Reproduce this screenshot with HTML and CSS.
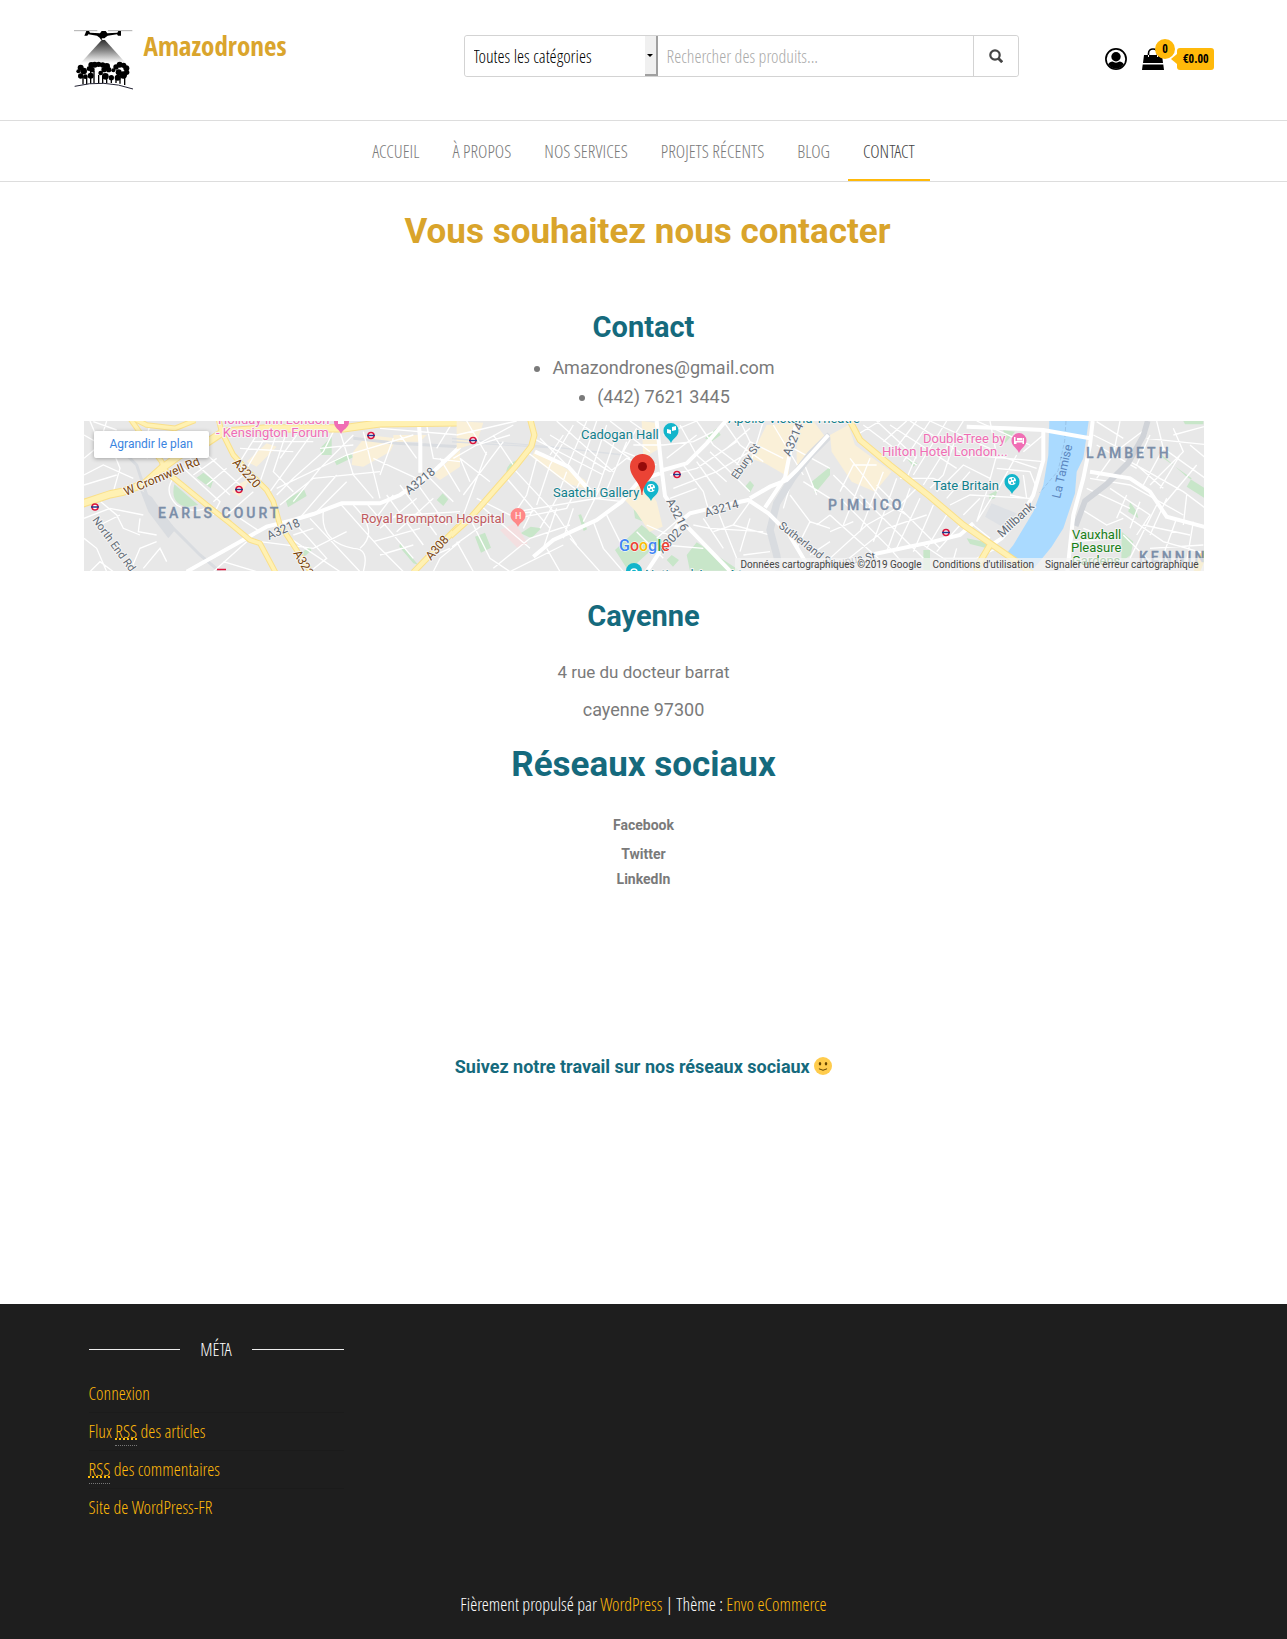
FILE: index.html
```html
<!DOCTYPE html>
<html lang="fr">
<head>
<meta charset="utf-8">
<meta name="viewport" content="width=device-width, initial-scale=1">
<title>Contact – Amazodrones</title>
<link rel="stylesheet" href="styles.css">
</head>
<body>
<header class="site-header">
  <div class="container header-row">
    <div class="branding">
      <a href="#" class="logo" aria-label="Amazodrones">
        <svg width="60" height="62" viewBox="0 0 180 186">
          <defs><linearGradient id="beam" x1="0" y1="0" x2="0" y2="1"><stop offset="0" stop-color="#222"/><stop offset=".5" stop-color="#888"/><stop offset="1" stop-color="#fff"/></linearGradient></defs>
          <path d="M88 28 20 102H155Z" fill="url(#beam)"/>
          <path d="M0 5H70M102 5H175" stroke="#888" stroke-width="2"/>
          <path d="M37 6h8l3 5 30 2 5-7h12l5 7 30-2 3-5h8v14h-9l-3-4-28 4-8 6-4 6h-8l-4-6-8-6-26-4-3 4h-9z"/>
          <path d="M83 28h11l-2 5h-7z" fill="#fff"/>
          <g>
            <circle cx="20" cy="116" r="9"/><circle cx="13" cy="127" r="6"/><circle cx="29" cy="126" r="10"/><circle cx="20" cy="141" r="8"/><circle cx="34" cy="143" r="7"/>
            <circle cx="52" cy="108" r="9"/><circle cx="45" cy="119" r="7"/><circle cx="62" cy="107" r="9"/><circle cx="74" cy="106" r="8"/><circle cx="86" cy="108" r="8"/><circle cx="54" cy="122" r="8"/>
            <circle cx="98" cy="112" r="10"/><circle cx="104" cy="122" r="8"/><circle cx="90" cy="122" r="8"/><circle cx="80" cy="132" r="7"/><circle cx="94" cy="142" r="10"/><circle cx="112" cy="146" r="8"/>
            <circle cx="126" cy="114" r="8"/><circle cx="137" cy="107" r="9"/><circle cx="149" cy="109" r="8"/><circle cx="157" cy="118" r="9"/><circle cx="158" cy="130" r="8"/><circle cx="148" cy="138" r="11"/><circle cx="134" cy="130" r="9"/><circle cx="118" cy="124" r="6"/><circle cx="131" cy="146" r="9"/><circle cx="50" cy="140" r="9"/>
          </g>
          <path d="M27 142v24M38 142v24M50 126v38M60 126v36M74 138v24M86 140v22M98 140v22M112 144v18M126 142v20M138 136v28M152 138v30" stroke="#000" stroke-width="4"/>
          <path d="M2 172Q90 150 177 180" fill="none" stroke="#223" stroke-width="3"/>
        </svg>
      </a>
      <a href="#" class="site-title">Amazodrones</a>
    </div>
    <form class="search">
      <select class="category" aria-label="Catégorie"><option>Toutes les catégories</option></select>
      <span class="select-arrow" aria-hidden="true"></span>
      <input class="query" type="text" placeholder="Rechercher des produits..." aria-label="Rechercher des produits">
      <button class="search-button" type="button" aria-label="Rechercher">
        <svg width="14" height="14" viewBox="0 0 14 14" fill="none" stroke="#444" stroke-width="2.2"><circle cx="6" cy="6" r="4.700"/><path d="m9.500 9.500 3.700 3.700" stroke-width="2.800"/></svg>
      </button>
    </form>
    <div class="account">
      <a href="#" aria-label="Mon compte">
        <svg width="22" height="22" viewBox="0 0 22 22"><circle cx="11" cy="11" r="10.100" fill="none" stroke="#000" stroke-width="1.700"/><circle cx="11" cy="8.700" r="4.700"/><path d="M3.200 16.200c1-2 2.700-2.400 4.300-2.700 2 1.500 5 1.500 7 0 1.600.3 3.300.7 4.300 2.700A9.500 9.500 0 0 1 11 20.500a9.500 9.500 0 0 1-7.800-4.300z"/></svg>
      </a>
      <a href="#" class="cart">
        <svg width="22" height="22" viewBox="0 0 22 22"><path d="M2 7h18l1 8H1zM.7 16.500h20.600L22 22H0z"/><path d="M6.500 9V5.500C6.500 2.500 8.500 1 11 1s4.500 1.500 4.500 4.500V9" fill="none" stroke="#000" stroke-width="1.600"/><path d="M6.500 7v2M15.500 7v2" stroke="#fff"/></svg>
        <span class="count">0</span>
        <span class="amount">€0.00</span>
      </a>
    </div>
  </div>
</header>
<nav class="main-nav">
  <a href="#">Accueil</a><a href="#">À propos</a><a href="#">Nos services</a><a href="#">Projets récents</a><a href="#">Blog</a><a href="#" class="active">Contact</a>
</nav>
<main class="content">
  <h1>Vous souhaitez nous contacter</h1>
  <section class="contact">
    <h2>Contact</h2>
    <ul><li>Amazondrones@gmail.com</li><li>(442) 7621 3445</li></ul>
  </section>
  <div class="map">
    <svg class="map-canvas" viewBox="0 0 1120 150" preserveAspectRatio="xMidYMid slice" role="img" aria-label="Plan de Londres">
      <rect width="1120" height="150" fill="#e8e8e8"/>
      <g transform="translate(-4 -6) scale(.33333)" fill="none">
        <path fill="#c8e6c9" d="m350 188 20-15 30 22-8 25zM283 208q-14 60 40 68l32-6zM617 255l55-32 8 20-56 34zM762 135l50-20 8 12-50 24zM1070 255l18-20 17 18-15 20zM960 385l55 65-15-5-42-50zM720 100l35-35v55h-30zM668 410l22-15 4 12-22 18zM1000 20h20v10h-20z"/>
        <path fill="#faf0d8" d="m820 110 40-50 90 10-20 40-80 45-35-5zM940 60h100l-20 20h-80zM1060 180l80-75v50l-60 40zM470 210l40-20-30 55-25-15zM500 140l60-55 30 10-60 60z"/>
        <path stroke="#d9dce0" stroke-width="9" d="m115 95 55 55 30 90 80 100 80 80 60 50M820 70l130 15 190 10"/>
        <path fill="#d9dce0" d="m180 225 35 20 70 100-20 25-60-80z"/>
        <path stroke="#fff" stroke-width="4" d="M12 60 100 110 120 160 100 230M30 18 60 90 12 130M60 90 150 70M80 18 70 50 180 50M12 180 70 150 160 190M12 210 110 180M40 20 110 45M50 250 110 300 130 340 180 360M12 310 90 280 190 300M60 330 120 300M150 470 180 400 230 380M12 370 50 400 80 470M100 470 60 440 30 470M180 310 175 350 230 360M190 460 240 400 260 440M280 190Q250 230 290 270 340 300 390 275M300 150 420 260 400 300M330 130 450 240M360 100 480 210M380 210 440 160M340 180 410 130M400 260 490 180M440 300 520 230M200 130 290 60 380 70M210 30 190 100M530 60 480 140M560 60 500 160M590 55 540 200M620 50 580 170 640 230M650 60 600 130M700 50 570 230M480 100 640 110M520 80 700 80M760 50 730 110 640 190 590 240M720 100 820 90M820 60 720 160 640 260M780 50 820 180 880 250M590 220 800 120 1000 60M600 270 700 190 900 170M650 320 770 180M700 300 800 200M850 50 900 250M880 130 1010 190M940 70 900 180M960 60 1010 130M900 40 1140 60M1040 30 1060 130 1140 140M1070 100 1120 18M1040 180 1120 260M1080 130 1140 230M1000 190 1100 330M960 210 1070 360M920 240 1030 390M860 265 1000 430M780 265 900 400 970 470M820 270Q900 350 840 400M730 290Q720 380 820 400 870 400 850 470M690 310 840 470M600 350 780 470M650 330 740 430 690 470M540 380 700 400 800 350M860 320 980 300 1140 290M880 380 1020 340M900 420 1000 390M400 470 500 380M430 440 530 470M540 350 480 310M640 360 700 340M940 240 880 320M1010 250 900 340M1060 250 950 350M1140 380 1080 430 1060 470M1040 430 1110 400"/>
        <path stroke="#fff" stroke-width="12" d="m320 470 160-90 80-45 80-20 60-18 85-32h115l60-25 100-70 80-75M1016 18l5 65v90"/>
        <g stroke="#fae08a" stroke-linejoin="round"><path stroke-width="25" d="m0 268 90-30 40-8 65-25 50-45 55-40 85-40 45-30 130-10h230l110-15 240-3"/><path stroke-width="17" d="m415 10 10 40 35 70 50 55 50 50 20 35 20 70 40 60 55 85M150 10l35 50 60 80 5 20 20 20 110 90 70 55 60 50 30 10 48 90M160 10l40 20 85 10 60-24"/><path stroke-width="19" d="m1000 472 60-62 95-95"/></g>
        <g stroke="#fff1b3" stroke-linejoin="round"><path stroke-width="19" d="m0 268 90-30 40-8 65-25 50-45 55-40 85-40 45-30 130-10h230l110-15 240-3"/><path stroke-width="11" d="m415 10 10 40 35 70 50 55 50 50 20 35 20 70 40 60 55 85M150 10l35 50 60 80 5 20 20 20 110 90 70 55 60 50 30 10 48 90M160 10l40 20 85 10 60-24"/><path stroke-width="13" d="m1000 472 60-62 95-95"/></g>
      </g>
      <svg x="368" width="752" height="150" viewBox="368 0 752 150"><g transform="translate(366 -6) scale(.33333)" fill="none">
        <path fill="#c8e6c9" d="m75 365 30-12 18 45-30 15zM550 275l15-18 48 28-8 45-50-20zM495 405l80-75 65 50-25 15-80 72zM710 420l30-38 130 85H720zM168 170q5-30 40-35l-15 30zM212 355l30-20 32 5-30 30zM885 215l15-18 12 14-12 22zM1085 200l55-45v25l-45 55zM650 435l15-15 22 15-18 20zM385 300l8-2 18 45-10 5zM765 70l35-30 12 20-25 18z"/>
        <path fill="#faf0d8" d="m20 18 80 5-20 60-60 20zM255 105l150 90 15 30-70-20-105-80zM520 250l50-60 50 70 18 75-40 15-40-60zM575 18l40 5 10 80-45 25zM900 130l50-100 80-5-15 160-70-40zM1040 18h50l45 60-95 90z"/>
        <path fill="#f4dfe0" d="m150 345 45-20 38 60-30 15z"/>
        <path stroke="#dcdfe3" stroke-width="4" d="M0 70 300 95 520 120M0 80l330 20"/>
        <path stroke="#fff" stroke-width="4" d="M20 60 200 18M50 18 110 120M10 130 80 90 180 60M60 200 30 130 120 200M110 110 40 300M130 60 190 150M160 80 40 240M80 90 190 30M80 250 180 300 250 290M60 310 120 430 180 470M20 380 70 470M0 400 140 300M90 270 240 400M170 190 300 340M190 160 320 300 380 390M230 110 400 240M270 70 430 230M250 70 460 180M300 60 480 170M340 60 300 120M370 30 300 150M410 18 350 160M440 18 380 190M470 30 410 210M500 60 440 230M530 80 460 250M320 18 490 170M380 18 540 130M260 130 230 240 190 300M300 150 260 270M350 170 320 250 270 340M390 200 350 280 200 310M450 220 400 320M500 240 200 290M430 250 520 260M250 280 220 340M320 280 280 400M370 280 340 370M430 320 460 400 520 470M470 300 510 380M360 370 450 470M290 400 330 470M130 460 240 370 360 330M180 470 340 390M480 18 600 110M540 18 600 60M560 40 520 110M520 110 620 150M550 90 640 90M480 170 530 130 610 160M640 60 740 18M640 90 730 80 790 50M650 130 740 60M690 30 740 120 830 200M740 18 790 90 880 160M660 180 740 160 860 80M700 150 760 230 780 300M740 140 810 240M670 220 800 170 900 110M660 250 740 220M780 110 900 230M820 18 870 90 940 140M830 100 900 40M870 18 900 80 860 150M900 80 1000 130M940 18 900 150M970 30 1060 180M1030 100 1140 160M1060 140 1100 240M1060 200 1140 250M1020 240 1080 320 1140 340M1030 180 1000 280M900 260 850 330 790 350M800 280 860 430M760 310 820 400M850 330 960 360M900 310 870 410M730 330 780 340 940 350M880 420 960 410M560 350 640 430M620 370 690 310M590 330 680 370M640 390 760 400M1080 320 1040 400 1080 470M1140 380 1080 420M1100 330 1140 300"/>
        <path stroke="#d9dce0" stroke-width="22" d="m1140 60-60 60-50 65-50 80-20 80 20 75 10 60"/>
        <path stroke="#fff" stroke-width="12" d="m250 425 60-50 130-60 75-55 55-65 60-20M590 470l100-150 30-25 85-20 90-20 60 40 60 60 60 100M620 18l15 145 10 80 55 80 145 150M640 165l70-20 60-60 60-70M900 250l60-35 50-20 30-30 95-105M1040 18l-15 70-20 100-60 90M255 110l100 45 70 80"/>
        <path stroke="#fae08a" stroke-width="19" stroke-linejoin="round" d="m-110 472 110-108 60-54 70-80 70-80 44-56 9-34-13-50"/>
        <path stroke="#fff1b3" stroke-width="13" stroke-linejoin="round" d="m-110 472 110-108 60-54 70-80 70-80 44-56 9-34-13-50"/>
      </g></svg>
      <svg x="746" width="374" height="150" viewBox="746 0 374 150"><g transform="translate(746 -6) scale(.33333)" fill="none">
        <path fill="#c8e6c9" d="m520 45 35 5-30 35zM230 130l32 15-12 10zM985 110l85 75 55 35v30l-55-35 15-25-85-60zM475 240l28-15-8 25-15 5zM410 370l60 12 10 20-60-15zM875 350l35 30-8 40-28 20zM900 260l20 30 5 20-30-20zM1060 18h60v10h-55zM280 405h20v60h-20z"/>
        <path fill="#faf0d8" d="m0 60 55-30 20 60 110 80-50 60-70-30-60-90z"/>
        <path fill="#dee1e5" d="m485 265 75 30-35 45-60-35z"/>
        <path stroke="#fff" stroke-width="4" d="M100 30 260 150M80 60 150 18M140 18 260 130M180 30 380 160M160 80 230 18M190 110 260 18M220 140 300 18M250 180 350 18M280 210 400 18M240 18 420 130M320 230 400 150 480 190M350 250 420 170M300 18 500 110M360 270 420 240 600 250M500 120 470 230 440 320M560 120 500 230M480 18 500 120 620 160M440 18 600 90M580 110 640 60M500 160 600 170 620 220M580 180 590 250 540 240M380 60 340 180 300 220M420 120 640 140M400 300 450 250M440 320 490 240M430 330 480 370M30 230 70 150 140 150M10 180 110 280M60 130 160 260 230 300M120 130 40 330M160 170 90 350M200 190 130 380M240 220 170 410M270 250 200 400M310 270 250 410M350 300 290 400M390 330 320 410M0 300 100 390 190 470M30 250 180 400 240 470M90 240 280 430M140 210 330 400M0 350 70 320M0 430 110 330 200 280 260 220M20 460 170 340 290 300M210 190 310 190 380 220M260 120 230 190M380 400 360 470M340 430 440 430 500 400M280 390 400 470M560 400 590 330M790 60 870 100 950 40M800 20 880 70M870 18 850 120 800 190M800 90 920 160M960 60 920 150 1000 220M900 140 1060 230 1140 290M980 18 1000 100 1140 200M1000 100 940 210M1030 40 1060 110 960 210M950 70 1140 90M1030 60 1140 30M1080 90 1140 140M1050 120 990 220M1100 150 1000 270M1010 250 960 360M1070 240 1060 330M780 190 900 210 1060 300M770 220 900 280M840 220 960 300 920 360M890 240 860 310M930 260 900 340M980 270 900 430M1040 310 1000 420M1090 320 1070 440M750 280 830 330 880 310M760 340 840 370M730 380 870 370M870 290 1000 380 1140 420M940 330 1080 360M960 400 1120 390M880 360 990 470"/>
        <path fill="#aadaff" d="M658 18h118l-8 57-8 55-20 40-5 65-35 105-35 55-65 80-70-60 20-25 60-100 30-80 15-90z"/>
        <path stroke="#8fb6dc" stroke-width="2" stroke-dasharray="12 6" d="m708 18-4 60-20 90-55 65"/>
        <path stroke="#d0d3d8" stroke-width="17" d="m953 18-13 45-45 80-65 65-65 50-28 75"/>
        <path stroke="#fff" stroke-width="12" d="m410 35 120 5 110 5 140 25M640 45v90l-30 105-30 55-65 75-30 20M788 18l-8 72-20 100-30 110-18 170M780 170l120 20 60 40 50 75 130 35M120 420l190-40 80-20 40-35"/>
        <path stroke="#fae08a" stroke-width="20" stroke-linejoin="round" d="m60 18 30 57 90 75 120 95 100 85 80 55 80 55 45 35M480 390l-30 50-10 30M1100 470l20-50 30-20"/>
        <path stroke="#fff1b3" stroke-width="14" stroke-linejoin="round" d="m60 18 30 57 90 75 120 95 100 85 80 55 80 55 45 35M480 390l-30 50-10 30"/>
      </g></svg>
      <g fill="#fff" stroke="#dc143c" stroke-width="1.500">
        <circle cx="11" cy="86" r="3"/><circle cx="155" cy="68.500" r="3"/><circle cx="287" cy="14.500" r="3"/><circle cx="389" cy="19.500" r="3"/><circle cx="593" cy="53.500" r="3"/><circle cx="862" cy="111.500" r="3"/>
        <path stroke="#223a8c" d="M7 86h8M151 68.500h8M283 14.500h8M385 19.500h8M589 53.500h8M858 111.500h8"/><path d="M133 148.500h9"/>
      </g>
      <g class="place">
        <g class="hotel"><text x="134" y="3">Holiday Inn London</text><text x="132" y="16">- Kensington Forum</text><text x="839" y="22">DoubleTree by</text><text x="798" y="35">Hilton Hotel London...</text></g>
        <g class="culture"><text x="497" y="18">Cadogan Hall</text><text x="469" y="76">Saatchi Gallery</text><text x="849" y="69">Tate Britain</text><text x="644" y="2">Apollo Victoria Theatre</text><text x="561" y="158">National Army Museum</text></g>
        <text class="hospital" x="277" y="102">Royal Brompton Hospital</text>
        <g class="garden"><text x="988" y="118">Vauxhall</text><text x="987" y="131">Pleasure</text><text x="988" y="144">Gardens</text></g>
      </g>
      <g class="district"><text x="74" y="97">EARLS COURT</text><text x="744" y="89">PIMLICO</text><text x="1002" y="37">LAMBETH</text><text x="1055" y="141">KENNINGTON</text></g>
      <g class="road">
        <g class="major"><text transform="translate(42 75) rotate(-23)">W Cromwell Rd</text><text transform="translate(148 42) rotate(48)">A3220</text><text transform="translate(209 132) rotate(60)">A3220</text><text transform="translate(347 140) rotate(-49)">A308</text></g>
        <text transform="translate(325 74) rotate(-39)">A3218</text><text transform="translate(185 119) rotate(-24)">A3218</text><text class="minor" transform="translate(8 99) rotate(54)">North End Rd</text><text transform="translate(582 80) rotate(63)">A3216</text><text transform="translate(622 96) rotate(-16)">A3214</text><text transform="translate(706 36) rotate(-67)">A3214</text><text class="minor" transform="translate(653 59) rotate(-55)">Ebury St</text><text transform="translate(579 133) rotate(-48)">A302</text><text class="minor" transform="translate(694 106) rotate(38)">Sutherland St</text><text transform="translate(918 117) rotate(-43)">Millbank</text><text class="minor" transform="translate(750 146) rotate(-10)">Lupus St</text>
      </g>
      <text class="river" transform="translate(976 78) rotate(-77)">La Tamise</text>
      <g>
        <path fill="#f06eb4" d="M257 13c-2-5-7-6-7-12a7.500 7.500 0 0 1 15 0c0 6-6 7-8 12zM935 32c-2-5-7.500-7-7.500-12.500a7.500 7.500 0 0 1 15 0C942.500 25 937 27 935 32z"/>
        <path fill="#fff" d="M254 0h6v3h-6zM930 16h1.500v4h7v-3h1.500v6h-1.500v-1.500h-6V23H930zM933 17h5v2.500h-5z"/>
        <path fill="#f88" d="M434 106c-2-5-7.500-6-7.500-11.500a7.500 7.500 0 0 1 15 0C441.500 100 436 101 434 106z"/><text class="letter" x="431" y="98">H</text>
        <path fill="#12b5cb" d="M587 22c-2-5-7.500-6-7.500-12.500a7.500 7.500 0 0 1 15 0C594.500 16 589 17 587 22zM567 80c-2-5-7.500-6-7.500-12.500a7.500 7.500 0 0 1 15 0C574.500 74 569 75 567 80zM928 73c-2-5-7.500-6-7.500-12.500a7.500 7.500 0 0 1 15 0C935.500 67 930 68 928 73zM542 150a8 8 0 1 1 16 0z"/>
        <path fill="#fff" d="M583 8l4 1v4l-4-1zM588 6l4-1v4l-4 1z"/><path fill="none" stroke="#fff" stroke-width="1.500" d="M547 151a3 3 0 0 1 6 0"/>
        <g fill="#fff"><circle cx="567" cy="67" r="4"/><circle cx="928" cy="60" r="4"/></g><g fill="#12b5cb"><circle cx="565" cy="66" r="1"/><circle cx="568" cy="65" r="1"/><circle cx="570" cy="68" r="1"/><circle cx="567" cy="69" r="1"/><circle cx="926" cy="59" r="1"/><circle cx="929" cy="58" r="1"/><circle cx="931" cy="61" r="1"/><circle cx="928" cy="62" r="1"/></g>
      </g>
      <path fill="#ea4335" d="M557.500 74c0-13-11.500-17-11.500-28.500a12.500 12.500 0 0 1 25 0c0 11.500-12.500 15.500-12.500 28.500z"/><circle cx="558.500" cy="45.500" r="4.500" fill="#960a0a"/>
      <text class="google" x="535" y="130"><tspan fill="#4285f4">G</tspan><tspan fill="#ea4335">o</tspan><tspan fill="#fbbc05">o</tspan><tspan fill="#4285f4">g</tspan><tspan fill="#34a853">l</tspan><tspan fill="#ea4335">e</tspan></text>
    </svg>
    <a href="#" class="enlarge">Agrandir le plan</a>
    <div class="map-credits"><span>Données cartographiques ©2019 Google</span><a href="#">Conditions d'utilisation</a><a href="#">Signaler une erreur cartographique</a></div>
  </div>
  <section class="address">
    <h2>Cayenne</h2>
    <p class="street">4 rue du docteur barrat</p>
    <p>cayenne 97300</p>
  </section>
  <section class="social">
    <h2 class="large">Réseaux sociaux</h2>
    <div class="social-links"><a href="#" class="first">Facebook</a><a href="#">Twitter</a><a href="#">LinkedIn</a></div>
    <p class="follow">Suivez notre travail sur nos réseaux sociaux
      <svg width="18" height="18" viewBox="0 0 36 36" role="img" aria-label="sourire"><circle cx="18" cy="18" r="18" fill="#ffcc4d"/><g fill="#664500"><ellipse cx="12" cy="13.500" rx="2.500" ry="3.500"/><ellipse cx="24" cy="13.500" rx="2.500" ry="3.500"/></g><path d="M10.500 24Q18 29.500 25.500 24" fill="none" stroke="#664500" stroke-width="2" stroke-linecap="round"/></svg>
    </p>
  </section>
</main>
<footer class="site-footer">
  <div class="container">
    <section class="widget">
      <h3>Méta</h3>
      <ul><li><a href="#">Connexion</a></li><li><a href="#">Flux <abbr title="Really Simple Syndication">RSS</abbr> des articles</a></li><li><a href="#"><abbr title="Really Simple Syndication">RSS</abbr> des commentaires</a></li><li><a href="#">Site de WordPress-FR</a></li></ul>
    </section>
    <p class="credits">Fièrement propulsé par <a href="#">WordPress</a> | Thème : <a href="#">Envo eCommerce</a></p>
  </div>
</footer>
</body>
</html>
```
FILE: styles.css
```css
* { box-sizing: border-box; }
body {
  margin: 0;
  background: #fff;
  color: #7a7a7a;
  font-family: "Open Sans Condensed Light", "Open Sans Condensed", "Liberation Sans Narrow", sans-serif;
  font-size: 18px;
  font-weight: 300;
  line-height: 29px;
}
a { text-decoration: none; color: inherit; }
h1, h2, h3, p, ul { margin: 0; padding: 0; }
.container { max-width: 1170px; margin: 0 auto; padding: 0 15px; }

.header-row { display: flex; align-items: flex-start; height: 120px; padding-top: 29px; }
.branding { display: flex; gap: 10px; flex: 0 0 390px; }
.logo { height: 62px; }
.logo svg { display: block; }
.site-title { color: #daa52d; font-family: "Open Sans Condensed", sans-serif; font-size: 27px; font-weight: 700; line-height: 34px; }
.search {
  display: flex;
  flex: 0 0 555px;
  height: 42px;
  margin-top: 6px;
  border: 1px solid #d3d3d3;
  border-radius: 3px;
}
.search select, .search input { border: 0; background: #fff; font: inherit; outline: 0; }
.category { appearance: none; width: 180px; padding: 0 9px; color: #000; border-radius: 3px 0 0 3px; }
.select-arrow {
  display: flex;
  align-items: center;
  justify-content: center;
  width: 13px;
  background: #f0f0f0;
  border-right: 2px solid #a0a0a0;
  border-bottom: 2px solid #a0a0a0;
}
.select-arrow::after { content: ""; border: 3px solid transparent; border-top-color: #000; border-bottom: 0; }
.query { flex: 1; min-width: 0; padding: 0 9px; }
.query::placeholder { color: #aaa; opacity: 1; }
.search-button {
  display: grid;
  place-items: center;
  width: 45px;
  border: 0;
  border-left: 1px solid #d3d3d3;
  background: #fff;
  border-radius: 0 3px 3px 0;
}
.account { display: flex; gap: 15px; margin-left: auto; padding-top: 19px; }
.account svg { display: block; }
.cart { position: relative; display: flex; gap: 13px; color: #000; font-family: "Open Sans Condensed", sans-serif; font-size: 12px; font-weight: 700; line-height: 20px; }
.count {
  position: absolute;
  left: 13px;
  top: -9px;
  width: 20px;
  border-radius: 10px;
  background: #ffb90a;
  text-align: center;
}
.amount { position: relative; height: 22px; padding: 1px 5px 1px 6px; border-radius: 3px; background: #ffb90a; }
.amount::before {
  content: "";
  position: absolute;
  left: -6px;
  top: 6px;
  border: 5px solid transparent;
  border-left: 0;
  border-right: 6px solid #ffb90a;
}

.main-nav {
  display: flex;
  justify-content: center;
  gap: 3px;
  border: solid #ddd;
  border-width: 1px 0;
  text-transform: uppercase;
}
.main-nav a { padding: 16px 15px 13px; line-height: 29px; border-bottom: 2px solid transparent; }
.main-nav .active { color: #444; border-color: #ffb90a; }

.content {
  max-width: 1140px;
  margin: 0 auto;
  padding: 30px 10px 223px;
  font-family: Roboto, sans-serif;
  font-weight: 400;
  text-align: center;
}
h1 { color: #d9a42b; font-size: 35px; line-height: 40px; font-weight: 700; padding-left: 8px; }
h2 { color: #156a7d; font-size: 29px; line-height: 34px; font-weight: 700; }
.contact { padding-top: 58px; }
.contact ul { display: flex; flex-direction: column; align-items: center; margin-top: 9px; padding-left: 40px; }
.map { position: relative; height: 150px; margin-top: 10px; overflow: hidden; text-align: left; }
.map-canvas { display: block; width: 100%; height: 150px; }
.map-canvas text { font-size: 12px; }
.place text, .road text { paint-order: stroke; stroke: #f4f4f4; stroke-width: 2px; stroke-linejoin: round; }
.map-canvas .place text { font-size: 13px; }
.hotel { fill: #f06eb4; }
.culture { fill: #12808c; }
.hospital { fill: #c05a60; }
.garden { fill: #188018; }
.map-canvas .district text { font-size: 14px; font-weight: 500; letter-spacing: 3px; fill: #7b8ea8; stroke: #7b8ea8; stroke-width: .3px; }
.road { fill: #5f6a75; }
.map-canvas .minor { font-size: 11px; }
.major { fill: #7a4308; }
.map-canvas .river { fill: #5a86c0; }
.map-canvas .letter { font-size: 9px; fill: #fff; }
.map-canvas .google { font-size: 16px; font-weight: 500; paint-order: stroke; stroke: #fff; stroke-width: 1px; }
.enlarge {
  position: absolute;
  left: 10px;
  top: 10px;
  padding: 0 16px;
  border-radius: 2px;
  background: #fff;
  box-shadow: 0 1px 4px rgba(0, 0, 0, .3);
  color: #3a84df;
  font-size: 12px;
  line-height: 27px;
}
.map-credits {
  position: absolute;
  right: 0;
  bottom: 0;
  display: flex;
  color: #444;
  font-size: 10px;
  line-height: 12px;
}
.map-credits > * { padding: 1px 5px 0 6px; background: rgba(245, 245, 245, .7); }
.address { padding-top: 28px; }
.address p { margin-top: 8px; }
.address .street { margin-top: 25px; font-size: 17px; }
.social { padding-top: 21px; }
h2.large { font-size: 35px; line-height: 40px; }
.social-links { display: flex; flex-direction: column; align-items: center; margin-top: 28px; font-size: 14px; line-height: 25px; font-weight: 700; }
.social-links .first { margin-bottom: 4px; }
.follow { margin-top: 160px; color: #156a7d; font-weight: 700; }
.follow svg { vertical-align: -2px; }

.site-footer { background: #1e1e1e; color: #fff; padding: 30px 0 20px; }
.widget { width: 285px; padding: 0 15px; }
.widget h3 { display: flex; align-items: center; gap: 20px; font-size: 18px; font-weight: 300; line-height: 30px; text-transform: uppercase; }
.widget h3::before, .widget h3::after { content: ""; flex: 1; height: 1px; background: #eee; }
.widget ul { list-style: none; padding-top: 11px; }
.widget li { line-height: 37px; border-bottom: 1px solid #1b1b1b; }
.widget li:last-child { border: 0; }
.site-footer a { color: #ffb90a; }
abbr { padding-bottom: 2px; border-bottom: 1px dotted #777; text-decoration: underline dotted; }
.credits { margin-top: 64px; text-align: center; }
```
